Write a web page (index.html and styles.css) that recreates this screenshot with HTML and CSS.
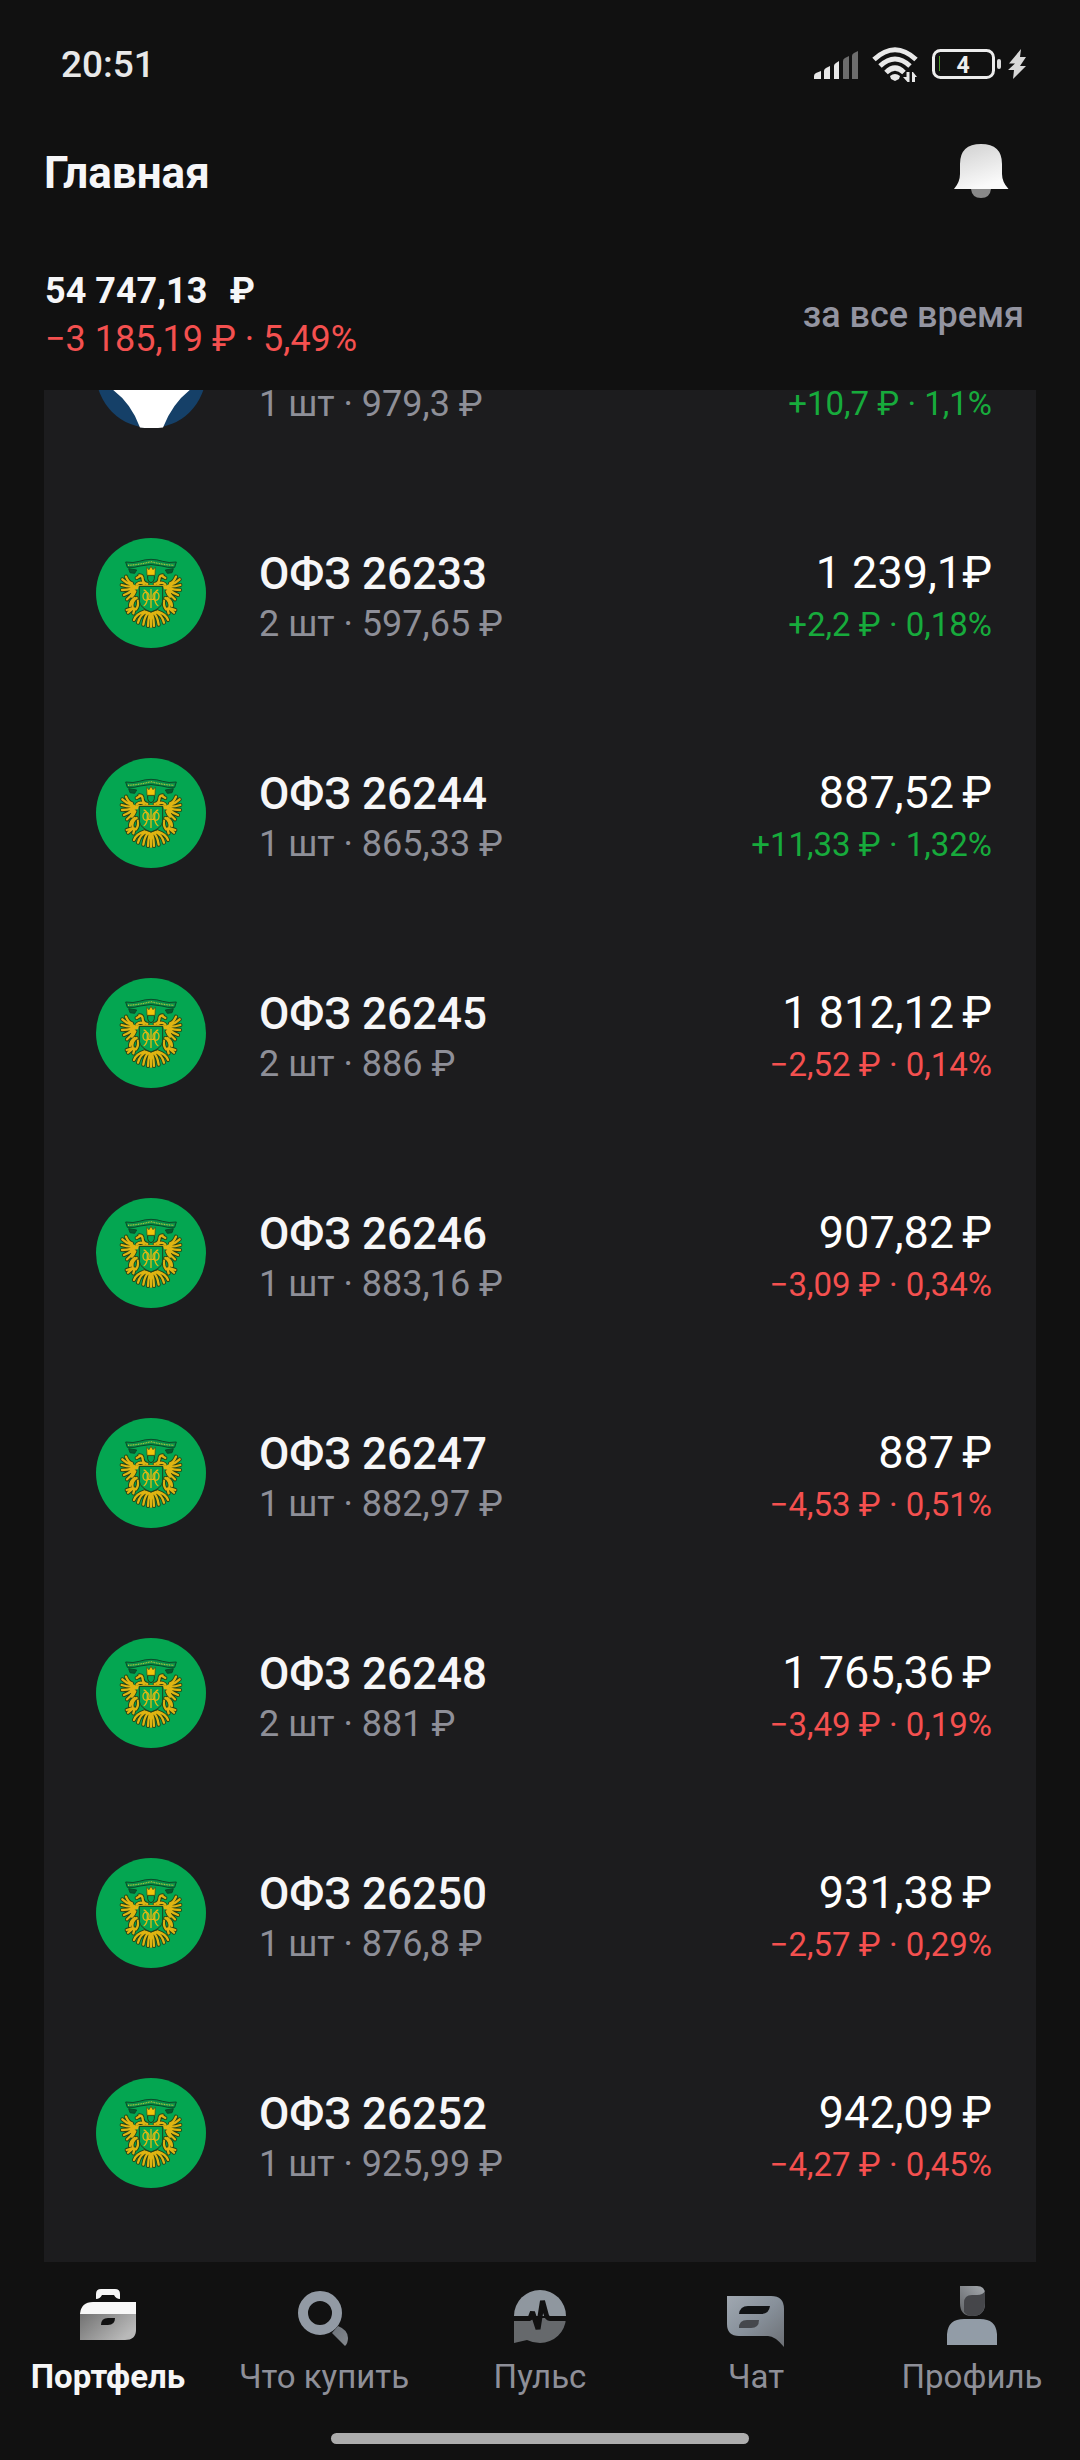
FILE: index.html
```html
<!DOCTYPE html>
<html lang="ru">
<head>
<meta charset="utf-8">
<meta name="viewport" content="width=device-width, initial-scale=1">
<title>Главная</title>
<link rel="stylesheet" href="styles.css">
</head>
<body>
<svg class="sprite" aria-hidden="true">
  <defs>
    <g id="feathers" fill="none" stroke-linecap="round" stroke-linejoin="round">
      <path d="M42 88Q30 84 24 68M40 92Q26 88 13 76M40 98Q26 98 11 93M42 104Q28 108 12 108M44 108Q32 118 18 123M48 110Q40 126 27 136M52 112Q48 122 42 128"/>
      <path d="M88 90Q76 88 74 76Q74 64 64 64M66 66L56 72M56 92Q66 82 78 90"/>
      <path d="M56 132Q40 142 44 160M50 132Q36 142 36 156M60 140Q62 156 54 166M46 162L30 176M44 162L26 168M50 164L46 178"/>
      <path d="M92 176Q80 184 76 212M86 174Q66 182 60 206M80 172Q54 180 48 198M96 178Q90 196 90 216"/>
    </g>
    <symbol id="emblem" viewBox="48 54 330 330">
      <circle cx="213" cy="219" r="165" fill="#04a651"/>
      <g transform="translate(114 102)">
        <path d="M23 24Q46 28 64 22Q99 10 134 22Q152 28 175 24L170 40Q148 42 132 36Q99 27 66 36Q50 42 28 40Z" fill="#078e48" stroke="#0b4a28" stroke-width="3"/>
        <path d="M32 44l24 4-6 10-14-2zM166 44l-24 4 6 10 14-2z" fill="#075c30" stroke="#0b4a28" stroke-width="3"/>
        <path d="M30 34Q66 32 99 23Q132 32 168 34" fill="none" stroke="#a9c83c" stroke-width="4" stroke-dasharray="3 2"/>
        <g stroke="#233f18" stroke-width="12">
          <use href="#feathers"/>
          <use href="#feathers" transform="matrix(-1 0 0 1 198 0)"/>
          <path d="M99 178V220"/>
        </g>
        <g stroke="#dfb412" stroke-width="7">
          <use href="#feathers"/>
          <use href="#feathers" transform="matrix(-1 0 0 1 198 0)"/>
          <path d="M99 178V221"/>
        </g>
        <path d="M40 86Q52 98 62 93H136Q146 98 158 86L154 112Q146 104 138 106L135 96H63L60 106Q52 104 44 112Z" fill="#dfb412"/>
        <path d="M89 64V74Q90 84 99 86Q108 84 109 74V64Z" fill="#04a651" stroke="#233f18" stroke-width="3"/>
        <path d="M86 40l7 7 6-10 6 10 7-7-1 24H87z" fill="#f2c40c" stroke="#3c4a14" stroke-width="2"/>
        <path d="M64 97H134V142Q132 162 99 174Q66 162 64 142Z" fill="#04a651" stroke="#233f18" stroke-width="3"/>
        <g fill="none" stroke="#dfb912" stroke-width="4">
          <path d="M99 105V162M77 108Q89 110 88 130Q88 150 77 156M121 108Q109 110 110 130Q110 150 121 156M88 136H110"/>
          <ellipse cx="84" cy="127" rx="9" ry="12"/>
          <ellipse cx="114" cy="127" rx="9" ry="12"/>
        </g>
      </g>
    </symbol>
    <linearGradient id="gBell" x1="0" y1="0" x2="0.4" y2="1"><stop offset="0" stop-color="#cfcfcf"/><stop offset="1" stop-color="#fafafa"/></linearGradient>
    <linearGradient id="gCase" x1="0" y1="0" x2="1" y2="0.5"><stop offset="0" stop-color="#727272"/><stop offset="1" stop-color="#b9b9b9"/></linearGradient>
    <linearGradient id="gTail" x1="0" y1="0" x2="1" y2="1"><stop offset="0" stop-color="#6c727a"/><stop offset="1" stop-color="#85898e"/></linearGradient>
    <linearGradient id="gChat" x1="0" y1="0" x2="1" y2="1"><stop offset="0" stop-color="#a0a8b1"/><stop offset="0.5" stop-color="#87909a"/><stop offset="1" stop-color="#6c6f74"/></linearGradient>
    <linearGradient id="gHead" x1="1" y1="0" x2="0" y2="1"><stop offset="0" stop-color="#a5a9ae"/><stop offset="1" stop-color="#606367"/></linearGradient>
  </defs>
</svg>
<div class="app">
  <div class="status">
    <time class="clock">20:51</time>
    <div class="indicators">
      <svg width="46" height="40" viewBox="813 45 46 40" role="img" aria-label="Сигнал">
        <path d="M814 79v-3q0-2 2-3l5-2v8zM824 79v-8q0-2 2-3l4-2v13zM834 79V66q0-2 2-3l3-2v18z" fill="#e8e8e8"/>
        <path d="M843 79V61q0-2 2-3l4-2v23zM852 79V56q0-2 2-3l4-2v28z" fill="#6d6d6d"/>
      </svg>
      <svg width="50" height="40" viewBox="869 45 50 40" role="img" aria-label="Wi-Fi">
        <g fill="none" stroke="#e8e8e8" stroke-width="5">
          <path d="M873 59.500Q894 40 915 59.500M879 66Q894 52 909 66M885 72.500Q894 63.500 903 72.500"/>
        </g>
        <path d="M889 76q5-4 10 0l-1 3-4 2-4-2z" fill="#e8e8e8"/>
        <path d="M905.500 72h3v10h-2l-4.500-5h3.500zM911 82V72h1l4 5h-2v5z" fill="#e8e8e8"/>
      </svg>
      <svg width="97" height="40" viewBox="931 45 97 40" role="img" aria-label="Батарея 4%, заряжается">
        <rect x="933.500" y="50.500" width="60" height="27" rx="7" fill="none" stroke="#ececec" stroke-width="3"/>
        <path d="M939.500 56v15" stroke="#4c9a2a" stroke-width="1"/>
        <rect x="997" y="59" width="4" height="10" rx="2" fill="#dcdcdc"/>
        <text x="963" y="73" class="battery-level">4</text>
        <path d="M1021 49L1009 63.500H1015L1008 70H1014L1013 79L1026 66H1020L1026 57H1020Z" fill="#d8d8d8"/>
      </svg>
    </div>
  </div>

  <header class="topbar">
    <h1 class="page-title">Главная</h1>
    <button class="bell" type="button" aria-label="Уведомления">
      <svg width="60" height="60" viewBox="951 143 60 60" aria-hidden="true">
        <path d="M971 189h20q-1 9-10 9t-10-9z" fill="#888"/>
        <path d="M954 189q6-7 6-15v-10q0-20 21-20t21 20v10q0 8 6.500 15z" fill="url(#gBell)"/>
      </svg>
    </button>
  </header>

  <section class="summary">
    <div>
      <p class="total">54 747,13<span class="total-currency">₽</span></p>
      <p class="total-change down">−3 185,19 ₽ · 5,49%</p>
    </div>
    <button class="period" type="button">за все время</button>
  </section>

  <main class="portfolio">
    <ul class="positions">
      <li class="row scrolled">
        <svg class="logo" viewBox="0 0 110 110" aria-hidden="true"><circle cx="55" cy="55" r="55" fill="#154068"/><path d="M0 20V62Q32 76 44 109.500Q55 111 67 109.500Q80 76 110 62V20Z" fill="#fff"/></svg>
        <div class="asset"><p class="qty">1 шт · 979,3 ₽</p></div>
        <div class="value"><p class="change up">+10,7 ₽ · 1,1%</p></div>
      </li>
      <li class="row">
        <svg class="logo" aria-hidden="true"><use href="#emblem"/></svg>
        <div class="asset"><h2 class="name">ОФЗ 26233</h2><p class="qty">2 шт · 597,65 ₽</p></div>
        <div class="value"><p class="price">1 239,1₽</p><p class="change up">+2,2 ₽ · 0,18%</p></div>
      </li>
      <li class="row">
        <svg class="logo" aria-hidden="true"><use href="#emblem"/></svg>
        <div class="asset"><h2 class="name">ОФЗ 26244</h2><p class="qty">1 шт · 865,33 ₽</p></div>
        <div class="value"><p class="price">887,52<span class="currency">₽</span></p><p class="change up">+11,33 ₽ · 1,32%</p></div>
      </li>
      <li class="row">
        <svg class="logo" aria-hidden="true"><use href="#emblem"/></svg>
        <div class="asset"><h2 class="name">ОФЗ 26245</h2><p class="qty">2 шт · 886 ₽</p></div>
        <div class="value"><p class="price">1 812,12<span class="currency">₽</span></p><p class="change down">−2,52 ₽ · 0,14%</p></div>
      </li>
      <li class="row">
        <svg class="logo" aria-hidden="true"><use href="#emblem"/></svg>
        <div class="asset"><h2 class="name">ОФЗ 26246</h2><p class="qty">1 шт · 883,16 ₽</p></div>
        <div class="value"><p class="price">907,82<span class="currency">₽</span></p><p class="change down">−3,09 ₽ · 0,34%</p></div>
      </li>
      <li class="row">
        <svg class="logo" aria-hidden="true"><use href="#emblem"/></svg>
        <div class="asset"><h2 class="name">ОФЗ 26247</h2><p class="qty">1 шт · 882,97 ₽</p></div>
        <div class="value"><p class="price">887<span class="currency">₽</span></p><p class="change down">−4,53 ₽ · 0,51%</p></div>
      </li>
      <li class="row">
        <svg class="logo" aria-hidden="true"><use href="#emblem"/></svg>
        <div class="asset"><h2 class="name">ОФЗ 26248</h2><p class="qty">2 шт · 881 ₽</p></div>
        <div class="value"><p class="price">1 765,36<span class="currency">₽</span></p><p class="change down">−3,49 ₽ · 0,19%</p></div>
      </li>
      <li class="row">
        <svg class="logo" aria-hidden="true"><use href="#emblem"/></svg>
        <div class="asset"><h2 class="name">ОФЗ 26250</h2><p class="qty">1 шт · 876,8 ₽</p></div>
        <div class="value"><p class="price">931,38<span class="currency">₽</span></p><p class="change down">−2,57 ₽ · 0,29%</p></div>
      </li>
      <li class="row">
        <svg class="logo" aria-hidden="true"><use href="#emblem"/></svg>
        <div class="asset"><h2 class="name">ОФЗ 26252</h2><p class="qty">1 шт · 925,99 ₽</p></div>
        <div class="value"><p class="price">942,09<span class="currency">₽</span></p><p class="change down">−4,27 ₽ · 0,45%</p></div>
      </li>
    </ul>
  </main>

  <nav class="tabs">
    <a class="tab active" href="#portfolio" aria-current="page">
      <svg class="tab-icon" viewBox="0 0 64 64" aria-hidden="true">
        <path d="M20 15V10Q20 5 25 5H39Q44 5 44 10V15Q40 15 38 11H26Q24 15 20 15Z" fill="#f6f6f6"/>
        <path d="M4 31V30Q5 18 17 18H60V31Z" fill="#f8f8f8"/>
        <path d="M4 30H60V46Q60 56 49 56H4ZM32 34Q25 34 25 41H32Q39 41 39 34Z" fill="url(#gCase)" fill-rule="evenodd"/>
      </svg>
      <span>Портфель</span>
    </a>
    <a class="tab" href="#buy">
      <svg class="tab-icon" viewBox="0 0 64 64" aria-hidden="true">
        <path d="M46 42Q56 46 56 54Q56 59 53 62L40 49Z" fill="url(#gTail)"/>
        <circle cx="28" cy="29" r="17" fill="none" stroke="#929aa4" stroke-width="10"/>
      </svg>
      <span>Что купить</span>
    </a>
    <a class="tab" href="#pulse">
      <svg class="tab-icon" viewBox="0 0 64 64" aria-hidden="true">
        <path d="M6 32A26 26 0 0 1 58 32Z" fill="#8f979f"/>
        <path d="M6 34H58A26 26 0 0 1 32 59Q25 59 19 56L6 59Z" fill="#66696c"/>
        <path d="M6 34.500H22L24.500 28L30 45L34.500 17L38 30Q39 34.500 42 34.500H58" fill="none" stroke="#111" stroke-width="5" stroke-linejoin="bevel"/>
      </svg>
      <span>Пульс</span>
    </a>
    <a class="tab" href="#chat">
      <svg class="tab-icon" viewBox="0 0 64 64" aria-hidden="true">
        <path d="M3 12H47Q60 12 60 25V63Q51 52 44 52H15Q3 52 3 40Z" fill="url(#gChat)"/>
        <path d="M24 22H46Q45 30 37 30H15Q16 22 24 22Z" fill="#111315"/>
        <path d="M23 36H35Q35 44 27 44H15Q15 36 23 36Z" fill="#45484d"/>
      </svg>
      <span>Чат</span>
    </a>
    <a class="tab" href="#profile">
      <svg class="tab-icon" viewBox="0 0 64 64" aria-hidden="true">
        <path d="M20 2H37Q45 2 45 10V19Q45 32 32 32Q20 32 20 19Z" fill="url(#gHead)"/>
        <path d="M24 28V19Q24 11 32 11H37Q43 11 45 7V19Q45 32 32 32Q27 32 24 28Z" fill="#45464a"/>
        <path d="M7 61V50Q8 35 24 35H40Q56 35 57 50V61Z" fill="#929ca7"/>
      </svg>
      <span>Профиль</span>
    </a>
  </nav>
  <div class="home-indicator"></div>
</div>
</body>
</html>
```
FILE: styles.css
```css
* {
  box-sizing: border-box;
}

body,
h1,
h2,
p,
ul {
  margin: 0;
  padding: 0;
}

body {
  background: #111;
  color: #f6f6f8;
  font-family: Roboto, "Noto Sans", sans-serif;
}

button {
  padding: 0;
  border: 0;
  background: none;
  color: inherit;
  font: inherit;
}

svg {
  display: block;
}

.sprite {
  position: absolute;
  width: 0;
  height: 0;
}

.app {
  display: flex;
  flex-direction: column;
  height: 100vh;
}

.status {
  display: flex;
  align-items: center;
  justify-content: space-between;
  height: 130px;
  padding: 0 52px 0 61px;
}

.clock {
  color: #e8e8e8;
  font-size: 37px;
  font-weight: 500;
  line-height: 44px;
}

.indicators {
  display: flex;
  gap: 11px;
}

.battery-level {
  fill: #ececec;
  font-size: 23px;
  font-weight: 700;
  text-anchor: middle;
}

.topbar {
  display: flex;
  align-items: center;
  justify-content: space-between;
  height: 86px;
  padding: 0 69px 0 44px;
}

.page-title {
  font-size: 44px;
  font-weight: 700;
  line-height: 52px;
}

.summary {
  display: flex;
  align-items: center;
  justify-content: space-between;
  padding: 51px 56px 27px 45px;
  font-size: 36px;
  line-height: 48px;
}

.total {
  font-weight: 700;
}

.total-currency {
  margin-left: 22px;
}

.period {
  color: #9394a0;
  font-weight: 500;
}

.up {
  color: #17ab3c;
}

.down {
  color: #f4504f;
}

.portfolio {
  display: flex;
  flex: 1;
  flex-direction: column;
  justify-content: flex-end;
  min-height: 0;
  margin: 0 44px;
  padding-bottom: 19px;
  overflow: hidden;
  background: #1c1c1e;
}

.positions {
  list-style: none;
}

.row {
  display: flex;
  align-items: flex-start;
  height: 220px;
  padding: 55px 44px 0 52px;
}

.row.scrolled {
  align-items: flex-end;
  padding-bottom: 55px;
}

.logo {
  flex: none;
  width: 110px;
  height: 110px;
}

.asset {
  flex: 1;
  padding: 8px 0 0 53px;
}

.scrolled .asset {
  padding-bottom: 2px;
}

.value {
  padding-top: 7px;
  text-align: right;
}

.name {
  font-size: 44px;
  font-weight: 500;
  line-height: 56px;
}

.price {
  color: #fff;
  font-size: 45px;
  line-height: 56px;
}

.currency {
  margin-left: 8px;
}

.qty {
  color: #8e8f98;
  font-size: 36px;
  line-height: 44px;
}

.change {
  font-size: 33px;
  line-height: 48px;
}

.tabs {
  display: grid;
  grid-template-columns: repeat(5, 1fr);
  padding: 22px 0 36px;
}

.tab {
  display: flex;
  flex-direction: column;
  align-items: center;
  gap: 9px;
  color: #8e8f98;
  font-size: 33px;
  line-height: 40px;
  text-decoration: none;
  white-space: nowrap;
}

.tab.active {
  color: #f6f6f6;
  font-weight: 700;
}

.tab-icon {
  width: 64px;
  height: 64px;
}

.home-indicator {
  align-self: center;
  width: 418px;
  height: 11px;
  margin-bottom: 16px;
  border-radius: 6px;
  background: #adadad;
}
```
